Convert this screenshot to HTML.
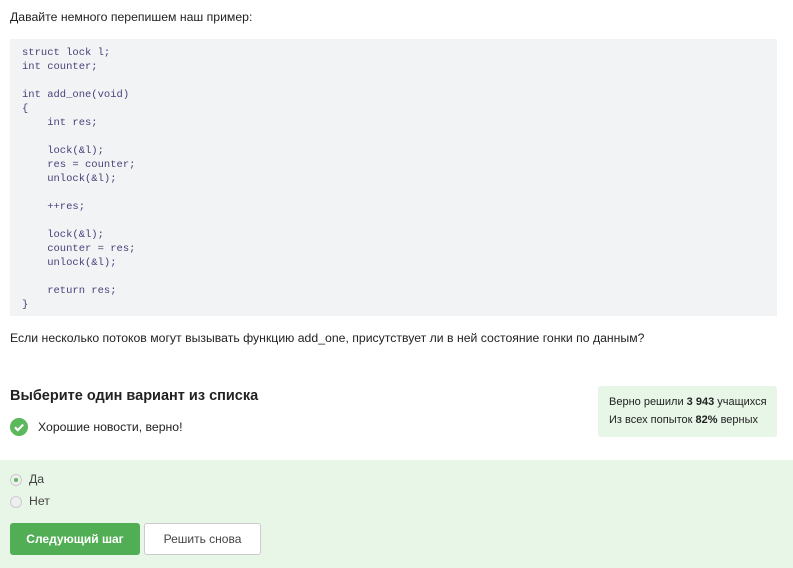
<!DOCTYPE html>
<html><head><meta charset="utf-8"><style>
body{margin:0;width:793px;height:568px;overflow:hidden;background:#fff;font-family:"Liberation Sans",sans-serif;color:#222;position:relative}
.a{position:absolute}
.p{font-size:12.25px;color:#222}
pre{position:absolute;left:10px;top:39px;width:743px;height:263px;margin:0;padding:7px 12px;background:#f2f3f5;font-family:"Liberation Mono",monospace;font-size:10.5px;line-height:14px;color:#4a3f7a}
</style></head><body>
<div class="a p" style="left:10px;top:10px">Давайте немного перепишем наш пример:</div>
<pre>struct lock l;
int counter;

int add_one(void)
{
    int res;

    lock(&amp;l);
    res = counter;
    unlock(&amp;l);

    ++res;

    lock(&amp;l);
    counter = res;
    unlock(&amp;l);

    return res;
}</pre>
<div class="a p" style="left:10px;top:331px">Если несколько потоков могут вызывать функцию add_one, присутствует ли в ней состояние гонки по данным?</div>
<div class="a" style="left:10px;top:388px;font-size:14.5px;font-weight:bold;color:#222">Выберите один вариант из списка</div>
<svg class="a" style="left:10px;top:418px" width="18" height="18"><circle cx="9" cy="9" r="9" fill="#5cb85c"/><path d="M5 9.3l2.8 2.8L13.2 6.6" stroke="#fff" stroke-width="2.2" fill="none"/></svg>
<div class="a p" style="left:38px;top:420px">Хорошие новости, верно!</div>
<div class="a" style="left:598px;top:386px;width:179px;height:51px;background:#e7f6e7;border-radius:3px;font-size:11px;color:#222">
<div class="a" style="left:11px;top:10px;white-space:nowrap">Верно решили <b>3 943</b> учащихся</div>
<div class="a" style="left:11px;top:28px;white-space:nowrap">Из всех попыток <b>82%</b> верных</div></div>
<div class="a" style="left:0;top:460px;width:793px;height:108px;background:#e7f6e7"></div>
<div class="a" style="left:10px;top:474px;width:10px;height:10px;border:1px solid #ccc;border-radius:50%;background:#eee"><div style="margin:3px;width:4px;height:4px;border-radius:50%;background:#5cb85c"></div></div>
<div class="a p" style="left:29px;top:472px;color:#444">Да</div>
<div class="a" style="left:10px;top:496px;width:10px;height:10px;border:1px solid #ccc;border-radius:50%;background:#eee"></div>
<div class="a p" style="left:29px;top:494px;color:#444">Нет</div>
<div class="a" style="left:10px;top:523px;width:130px;height:32px;background:#52ae55;border-radius:3px;color:#fff;font-size:12px;font-weight:bold;text-align:center;line-height:32px">Следующий шаг</div>
<div class="a" style="left:144px;top:523px;width:115px;height:30px;background:#fff;border:1px solid #ccc;border-radius:3px;color:#444;font-size:12px;text-align:center;line-height:30px">Решить снова</div>
</body></html>
